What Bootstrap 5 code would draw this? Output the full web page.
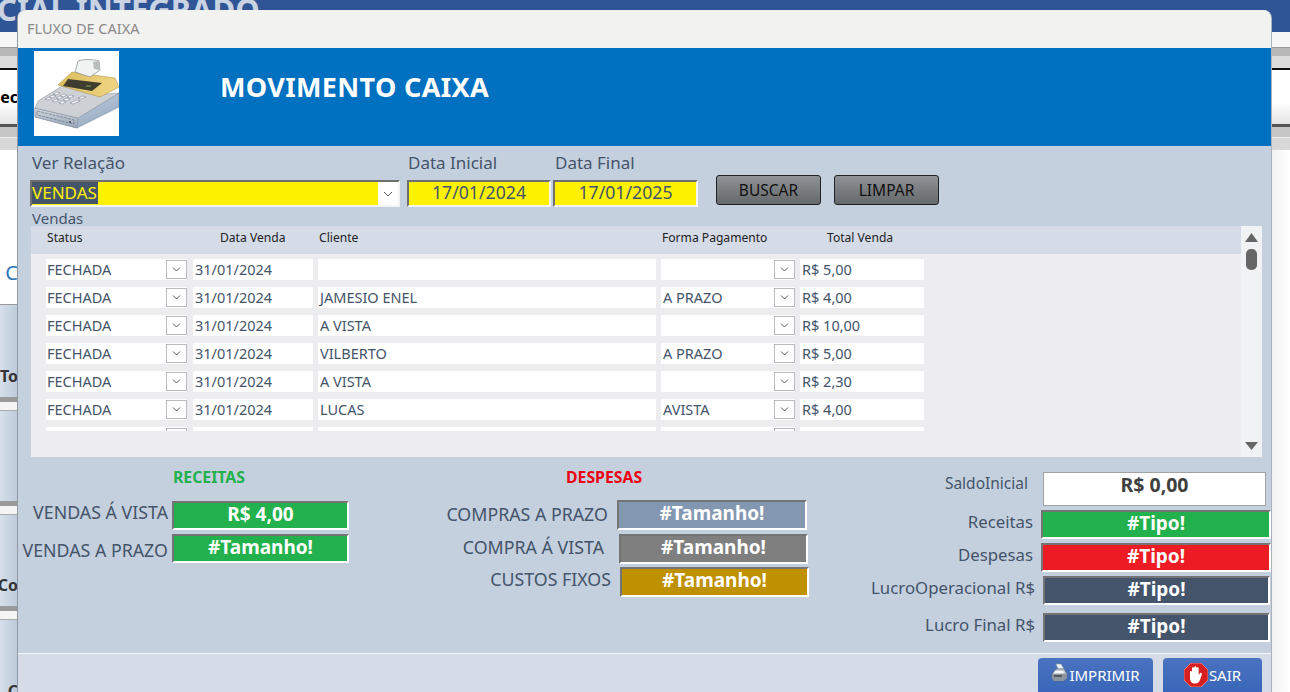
<!DOCTYPE html>
<html lang="pt-BR">
  <head>
    <meta charset="UTF-8" />
    <meta name="viewport" content="width=device-width, initial-scale=1" />
    <title>Fluxo de Caixa</title>
    <link
      href="https://cdn.jsdelivr.net/npm/bootstrap@5.3.0/dist/css/bootstrap.min.css"
      rel="stylesheet"
    />
    <style>
      html, body { height: 692px; overflow: hidden; }
      body { font-family: "Noto Sans", "Open Sans", sans-serif; color: #44546a; position: relative; background: #fff; }

      /* pagina por tras do formulario */
      .bk-top { height: 32px; background: #2f5597; overflow: hidden; }
      .bk-title { font: bold 31px/20px "Noto Sans", sans-serif; color: #c9d3e2; margin: -1px 0 0 -3px; white-space: nowrap; }
      .bk-a { height: 15px; background: #f6f6f6; }
      .bk-b { height: 9px; background: #b8b8b8; border-top: 1px solid #999; }
      .bk-c { height: 12px; background: #dcdcdc; }
      .bk-line { height: 2px; background: #111; }
      .bk-d { height: 54px; background: linear-gradient(#fff 60%, #e4e4e4); padding-top: 15px; }
      .bk-e { height: 3px; background: #555; }
      .bk-f { height: 10px; background: #c6c6c6; }
      .bk-g { height: 13px; background: #d8d8d8; border-top: 1px solid #eee; }
      .bk-side { width: 18px; overflow: hidden; }
      .bk-txt { display: flex; justify-content: flex-end; white-space: nowrap; }
      .bk-h { height: 155px; background: #fff; padding-top: 108px; border-bottom: 1px solid #999; color: #2e75b6; font-size: 20px; line-height: 30px; }
      .bk-blue { height: 92px; background: linear-gradient(90deg, #d6dfea, #bccada); color: #333; font-weight: 700; font-size: 16px; padding-top: 60px; line-height: 22px; }
      .bk-blue.plain { height: 90px; padding-top: 0; }
      .bk-blue.co { height: 91px; padding-top: 59px; }
      .bk-blue.last { height: 73px; padding-top: 60px; }
      .bk-bar { height: 5px; background: #999; }
      .bk-wh { height: 9px; background: #f5f5f5; border-bottom: 1px solid #aaa; }
      .bk-right { flex: 1; background: linear-gradient(90deg, #f1f1f1 98.4%, #fff); }

      /* janela */
      .win { position: absolute; left: 18px; top: 10px; width: 1253px; height: 682px; border-radius: 8px 8px 0 0; overflow: hidden; background: #c5d0de; box-shadow: -1px 0 0 #8f98a3, 1px 0 0 #a9b2bd; }
      .win-bar { height: 38px; background: #f2f2f0; color: #8a8a8a; font-size: 14.5px; line-height: 36px; padding-left: 9px; }
      .win-head { height: 98px; background: #0070c0; }
      .cash-ico { width: 85px; height: 85px; margin: 3px 0 0 16px; background: #fff; display: block; flex: none; }
      .win-title { font-size: 27px; font-weight: 700; color: #fff; margin: 21px 0 0 101px; line-height: 36px; letter-spacing: .35px; }

      /* filtro */
      .flt { padding-top: 6px; height: 65px; }
      .flt-lab { font-size: 17px; line-height: 22px; height: 28px; padding-left: 1px; }
      .flt-combo .flt-lab { padding-left: 2px; }
      .flt-d2 .flt-lab { padding-left: 2px; }
      .flt-combo { width: 370px; margin-left: 12px; }
      .flt-d1 { width: 144px; margin-left: 7px; }
      .flt-d2 { width: 145px; margin-left: 2px; }
      .combo-box { height: 27px; background: #fff200; display: flex; align-items: stretch; border: 2px solid; border-color: #6f6f6f #f4f4f4 #f4f4f4 #6f6f6f; font-size: 17px; }
      .combo-sel { background: #44546a; color: #fff200; height: 22px; line-height: 21px; padding: 0 1px 0 0; }
      .combo-btn { width: 20px; margin-left: auto; background: #fff; display: flex; align-items: center; justify-content: center; }
      .date-box { height: 27px; background: #fff200; border: 2px solid; border-color: #6f6f6f #f4f4f4 #f4f4f4 #6f6f6f; font-size: 17.700px; line-height: 21px; text-align: center; }
      .flt-btn { width: 105px; height: 30px; margin-top: 23px; padding: 0; border: 1px solid #222; border-radius: 3px; background: linear-gradient(#8f9296, #66696b); color: #111; font-size: 15.500px; line-height: 26px; }
      .flt-b1 { margin-left: 18px; }
      .flt-b2 { margin-left: 13px; }

      /* subformulario */
      .sub-lab { font-size: 15px; line-height: 15px; margin-left: 14px; }
      .sub { width: 1231px; height: 231px; margin-left: 13px; background: #ededef; }
      .sub-main { width: 1210px; }
      .sub-head { height: 28px; background: #d5dce8; color: #222; font-size: 12.100px; line-height: 23px; }
      .sub-det { height: 177px; overflow: hidden; padding-top: 5px; }
      .gr { display: grid; grid-template-columns: 142px 120px 338px 134px 124px; column-gap: 5px; margin-left: 15px; }
      .gr + .gr { margin-top: 7px; }
      .cel { background: #fff; height: 21px; font-size: 14.500px; line-height: 21px; padding-left: 2px; white-space: nowrap; overflow: hidden; }
      .cel-c { display: flex; }
      .cel-c span { flex: 1; }
      .cel-st { background: linear-gradient(90deg, #fff 141px, transparent 141px); padding-left: 1px; }
      .drop { width: 21px; height: 19px; margin: 1px 1px 1px 0; background: #fff; border: 1px solid #bbb; display: flex; align-items: center; justify-content: center; }
      .cel-fp .drop { margin-right: 0; }
      .h-pad { padding-left: 27px; }
      .h-one { padding-left: 1px; }
      .sub-scroll { width: 21px; background: #f1f2f4; display: flex; flex-direction: column; align-items: center; padding-top: 7px; }
      .thumb { width: 11px; height: 21px; background: #666; border-radius: 5px; margin-top: 7px; }
      .arr-d { margin-top: auto; margin-bottom: 7px; }

      /* totais */
      .tot { height: 196px; }
      .tc-a { width: 331px; padding-top: 12px; }
      .tc-b { width: 379px; margin-left: 81px; padding-top: 12px; }
      .tc-c { width: 411px; margin-left: 51px; padding-top: 15px; }
      .tit { font-size: 15.800px; font-weight: 700; line-height: 17px; }
      .tit-r { color: #22b14c; padding-left: 155px; margin-bottom: 15px; }
      .tit-d { color: #ed0010; padding-left: 136px; margin-bottom: 14px; }
      .ln { display: flex; justify-content: flex-end; align-items: center; margin-top: 4px; }
      .tit + .ln, .ln:first-child { margin-top: 0; }
      .ln-lab { font-size: 17.800px; line-height: 20px; white-space: nowrap; }
      .tc-c .ln-lab { font-size: 16.800px; margin-bottom: 5px; }
      .tc-c .saldo-lab { font-size: 15.500px; margin-bottom: 12px; }
      .vb { height: 29px; border: 2px solid; border-color: #747474 #fff #fff #747474; color: #fff; font-size: 19px; font-weight: 700; line-height: 23px; text-align: center; }
      .vb-green { background: #22b14c; }
      .vb-steel { background: #8497b0; }
      .vb-gray { background: #7f7f7f; }
      .vb-gold { background: #bf9000; }
      .vb-red { background: #ed1c24; }
      .vb-navy { background: #44546a; }
      .w177 { width: 177px; margin-left: 4px; }
      .up2 { margin-bottom: 2px; }
      .up4 { margin-bottom: 4px; }
      .up7 { margin-bottom: 7px; }
      .up8 { margin-bottom: 8px; }
      .dn3 { margin-top: 3px; }
      .b1 { width: 190px; height: 30px; margin: 0 2px 0 9px; }
      .b2 { width: 189px; height: 30px; margin: 0 1px 0 15px; }
      .b3 { width: 189px; height: 30px; margin-left: 9px; }
      .ln-b2 { margin-top: 4px; }
      .ln-b3 { margin-top: 3px; }
      .saldo { width: 223px; height: 34px; margin: 0 5px 0 15px; background: #fff; border: 1px solid #a3a3a3; color: #404040; font-size: 19.500px; font-weight: 700; line-height: 23px; text-align: center; }
      .w230 { width: 230px; margin: 0 0 0 8px; }
      .w227 { width: 227px; margin: 0 1px 0 8px; }
      .ln-last { margin-top: 8px; }

      /* rodape */
      .foot { height: 39px; background: #d5dbe7; border-top: 1px solid #f4f6f9; padding: 4px 9px 0 0; gap: 10px; overflow: hidden; }
      .foot-btn { height: 44px; padding: 0; border: 0; border-radius: 4px 4px 0 0; background: linear-gradient(#4a73c0, #3563b8); color: #fff; font-size: 15px; display: flex; justify-content: center; gap: 1px; line-height: 34px; }
      .foot-btn:hover { color: #fff; }
      .fb-imp { width: 115px; }
      .fb-sair { width: 99px; }
      .foot-ico { margin-top: 5px; flex: none; }
    </style>
  </head>
  <body>
    <!-- pagina de fundo -->
    <div class="bk-top"><div class="bk-title">CIAL INTEGRADO</div></div>
    <div class="bk-a"></div>
    <div class="bk-b"></div>
    <div class="bk-c"></div>
    <div class="bk-line"></div>
    <div class="bk-d"><div class="bk-side bk-txt fw-bold text-black">ec</div></div>
    <div class="bk-e"></div>
    <div class="bk-f"></div>
    <div class="bk-g"></div>
    <div class="d-flex">
      <div class="bk-side">
        <div class="bk-h bk-txt">C</div>
        <div class="bk-blue bk-txt">To</div>
        <div class="bk-bar"></div>
        <div class="bk-wh"></div>
        <div class="bk-blue plain"></div>
        <div class="bk-bar"></div>
        <div class="bk-wh"></div>
        <div class="bk-blue co bk-txt">Co</div>
        <div class="bk-bar"></div>
        <div class="bk-wh"></div>
        <div class="bk-blue last bk-txt">C</div>
      </div>
      <div class="bk-right"></div>
    </div>

    <!-- janela do formulario -->
    <div class="win">
      <div class="win-bar">FLUXO DE CAIXA</div>

      <div class="win-head d-flex">
        <svg class="cash-ico" viewBox="0 0 85 85" aria-label="Caixa registradora">
          <defs>
            <linearGradient id="gBase" x1="0" y1="0" x2="1" y2="1">
              <stop offset="0" stop-color="#d3deea" />
              <stop offset="1" stop-color="#8ea3bc" />
            </linearGradient>
            <linearGradient id="gFront" x1="0" y1="0" x2="0" y2="1">
              <stop offset="0" stop-color="#d4d9e0" />
              <stop offset="1" stop-color="#97a6b8" />
            </linearGradient>
            <linearGradient id="gYel" x1="0" y1="0" x2="1" y2="0">
              <stop offset="0" stop-color="#dcbd5c" />
              <stop offset="1" stop-color="#f0d584" />
            </linearGradient>
          </defs>
          <path d="M1 57 44 67 85 42V56L43 77 1 66Z" fill="url(#gBase)" stroke="#77879a" stroke-width=".5" />
          <path d="M1 57 44 67 43 77 1 66Z" fill="url(#gFront)" stroke="#77879a" stroke-width=".5" />
          <path d="M3 60 40 69 40 73 3 64Z" fill="none" stroke="#67727f" stroke-width=".7" stroke-dasharray="3 1" />
          <circle cx="36" cy="71" r="1" fill="#445" />
          <path d="M1 57 4 50 28 35 72 43 85 42 44 67Z" fill="#cdd1d6" stroke="#858e99" stroke-width=".5" />
          <path d="M24 34 38 21 81 27 85 36 66 46Z" fill="url(#gYel)" stroke="#a68c42" stroke-width=".5" />
          <path d="M29 35 34 28 68 32 58 40Z" fill="#3f3d30" />
          <path d="M52 35h5" stroke="#7fa552" stroke-width="1.200" />
          <path d="M41 21 44 10C50 8 58 8 65 10L66 19 56 26Z" fill="#f1f2f2" stroke="#85898a" stroke-width=".7" />
          <path d="M65 10 66 19 60 18 59 11Z" fill="#b9bdbd" />
          <g fill="#fcfcfd" stroke="#6e7986" stroke-width=".5">
            <path d="M19 43l4-2 3 1-4 2zM26 45l4-2 3 1-4 2zM33 46l4-2 3 1-4 2z" />
            <path d="M15 46l4-2 3 1-4 2zM22 47l4-2 3 1-4 2zM29 49l4-2 3 1-4 2z" />
            <path d="M11 48l4-2 3 1-4 2zM18 50l4-2 3 1-4 2zM25 52l4-2 3 1-4 2z" />
            <path d="M36 52l7-3 3 1-7 3zM44 47l5-2 3 1-5 2z" />
          </g>
        </svg>
        <div class="win-title">MOVIMENTO CAIXA</div>
      </div>

      <!-- filtro -->
      <div class="flt d-flex">
        <div class="flt-combo">
          <div class="flt-lab">Ver Relação</div>
          <div class="combo-box">
            <span class="combo-sel">VENDAS</span>
            <span class="combo-btn">
              <svg width="10" height="6" viewBox="0 0 10 6"><path d="M1 1 5 5 9 1" fill="none" stroke="#555" /></svg>
            </span>
          </div>
        </div>
        <div class="flt-d1">
          <div class="flt-lab">Data Inicial</div>
          <div class="date-box">17/01/2024</div>
        </div>
        <div class="flt-d2">
          <div class="flt-lab">Data Final</div>
          <div class="date-box">17/01/2025</div>
        </div>
        <button type="button" class="btn flt-btn flt-b1">BUSCAR</button>
        <button type="button" class="btn flt-btn flt-b2">LIMPAR</button>
      </div>

      <div class="sub-lab">Vendas</div>
      <div class="sub d-flex">
        <div class="sub-main">
          <div class="sub-head">
            <div class="gr">
              <div class="h-one">Status</div>
              <div class="h-pad">Data Venda</div>
              <div class="h-one">Cliente</div>
              <div class="h-one">Forma Pagamento</div>
              <div class="h-pad">Total Venda</div>
            </div>
          </div>
          <div class="sub-det">
            <div class="gr">
              <div class="cel cel-c cel-st"><span>FECHADA</span><i class="drop"><svg width="9" height="5" viewBox="0 0 9 5"><path d="M1 .5 4.500 4 8 .5" fill="none" stroke="#555" /></svg></i></div>
              <div class="cel">31/01/2024</div>
              <div class="cel"></div>
              <div class="cel cel-c cel-fp"><span></span><i class="drop"><svg width="9" height="5" viewBox="0 0 9 5"><path d="M1 .5 4.500 4 8 .5" fill="none" stroke="#555" /></svg></i></div>
              <div class="cel">R$ 5,00</div>
            </div>
            <div class="gr">
              <div class="cel cel-c cel-st"><span>FECHADA</span><i class="drop"><svg width="9" height="5" viewBox="0 0 9 5"><path d="M1 .5 4.500 4 8 .5" fill="none" stroke="#555" /></svg></i></div>
              <div class="cel">31/01/2024</div>
              <div class="cel">JAMESIO ENEL</div>
              <div class="cel cel-c cel-fp"><span>A PRAZO</span><i class="drop"><svg width="9" height="5" viewBox="0 0 9 5"><path d="M1 .5 4.500 4 8 .5" fill="none" stroke="#555" /></svg></i></div>
              <div class="cel">R$ 4,00</div>
            </div>
            <div class="gr">
              <div class="cel cel-c cel-st"><span>FECHADA</span><i class="drop"><svg width="9" height="5" viewBox="0 0 9 5"><path d="M1 .5 4.500 4 8 .5" fill="none" stroke="#555" /></svg></i></div>
              <div class="cel">31/01/2024</div>
              <div class="cel">A VISTA</div>
              <div class="cel cel-c cel-fp"><span></span><i class="drop"><svg width="9" height="5" viewBox="0 0 9 5"><path d="M1 .5 4.500 4 8 .5" fill="none" stroke="#555" /></svg></i></div>
              <div class="cel">R$ 10,00</div>
            </div>
            <div class="gr">
              <div class="cel cel-c cel-st"><span>FECHADA</span><i class="drop"><svg width="9" height="5" viewBox="0 0 9 5"><path d="M1 .5 4.500 4 8 .5" fill="none" stroke="#555" /></svg></i></div>
              <div class="cel">31/01/2024</div>
              <div class="cel">VILBERTO</div>
              <div class="cel cel-c cel-fp"><span>A PRAZO</span><i class="drop"><svg width="9" height="5" viewBox="0 0 9 5"><path d="M1 .5 4.500 4 8 .5" fill="none" stroke="#555" /></svg></i></div>
              <div class="cel">R$ 5,00</div>
            </div>
            <div class="gr">
              <div class="cel cel-c cel-st"><span>FECHADA</span><i class="drop"><svg width="9" height="5" viewBox="0 0 9 5"><path d="M1 .5 4.500 4 8 .5" fill="none" stroke="#555" /></svg></i></div>
              <div class="cel">31/01/2024</div>
              <div class="cel">A VISTA</div>
              <div class="cel cel-c cel-fp"><span></span><i class="drop"><svg width="9" height="5" viewBox="0 0 9 5"><path d="M1 .5 4.500 4 8 .5" fill="none" stroke="#555" /></svg></i></div>
              <div class="cel">R$ 2,30</div>
            </div>
            <div class="gr">
              <div class="cel cel-c cel-st"><span>FECHADA</span><i class="drop"><svg width="9" height="5" viewBox="0 0 9 5"><path d="M1 .5 4.500 4 8 .5" fill="none" stroke="#555" /></svg></i></div>
              <div class="cel">31/01/2024</div>
              <div class="cel">LUCAS</div>
              <div class="cel cel-c cel-fp"><span>AVISTA</span><i class="drop"><svg width="9" height="5" viewBox="0 0 9 5"><path d="M1 .5 4.500 4 8 .5" fill="none" stroke="#555" /></svg></i></div>
              <div class="cel">R$ 4,00</div>
            </div>
            <!-- setima linha, cortada pela area de rolagem -->
            <div class="gr">
              <div class="cel cel-c cel-st"><span></span><i class="drop"></i></div>
              <div class="cel"></div>
              <div class="cel"></div>
              <div class="cel cel-c cel-fp"><span></span><i class="drop"></i></div>
              <div class="cel"></div>
            </div>
          </div>
        </div>
        <div class="sub-scroll">
          <svg width="13" height="9" viewBox="0 0 13 9"><path d="M6.500 0 13 9H0Z" fill="#666" /></svg>
          <div class="thumb"></div>
          <svg class="arr-d" width="13" height="8" viewBox="0 0 13 8"><path d="M0 0H13L6.500 8Z" fill="#666" /></svg>
        </div>
      </div>

      <!-- totais -->
      <div class="tot d-flex">
        <div class="tc-a">
          <div class="tit tit-r">RECEITAS</div>
          <div class="ln">
            <div class="ln-lab up8">VENDAS Á VISTA</div>
            <div class="vb vb-green w177">R$ 4,00</div>
          </div>
          <div class="ln">
            <div class="ln-lab dn3">VENDAS A PRAZO</div>
            <div class="vb vb-green w177">#Tamanho!</div>
          </div>
        </div>
        <div class="tc-b">
          <div class="tit tit-d">DESPESAS</div>
          <div class="ln">
            <div class="ln-lab up2">COMPRAS A PRAZO</div>
            <div class="vb vb-steel b1">#Tamanho!</div>
          </div>
          <div class="ln ln-b2">
            <div class="ln-lab up4">COMPRA Á VISTA</div>
            <div class="vb vb-gray b2">#Tamanho!</div>
          </div>
          <div class="ln ln-b3">
            <div class="ln-lab up7">CUSTOS FIXOS</div>
            <div class="vb vb-gold b3">#Tamanho!</div>
          </div>
        </div>
        <div class="tc-c">
          <div class="ln">
            <div class="ln-lab saldo-lab">SaldoInicial</div>
            <div class="saldo">R$ 0,00</div>
          </div>
          <div class="ln">
            <div class="ln-lab">Receitas</div>
            <div class="vb vb-green w230">#Tipo!</div>
          </div>
          <div class="ln">
            <div class="ln-lab">Despesas</div>
            <div class="vb vb-red w230">#Tipo!</div>
          </div>
          <div class="ln">
            <div class="ln-lab">LucroOperacional R$</div>
            <div class="vb vb-navy w227">#Tipo!</div>
          </div>
          <div class="ln ln-last">
            <div class="ln-lab">Lucro Final R$</div>
            <div class="vb vb-navy w227">#Tipo!</div>
          </div>
        </div>
      </div>

      <!-- rodape -->
      <div class="foot d-flex justify-content-end">
        <button type="button" class="btn foot-btn fb-imp">
          <svg class="foot-ico" width="17" height="19" viewBox="0 0 17 19" aria-hidden="true">
            <path d="M5 1h5l3 5H7Z" fill="#eef2f6" stroke="#8d98a6" stroke-width=".6" />
            <path d="M1 11 5 6h8l3 5v4l-4 3H3l-2-3Z" fill="#c4cbd3" stroke="#59616b" stroke-width=".6" />
            <path d="M1 11h11l4-1v5l-4 3H3l-2-3Z" fill="#8c949e" />
            <path d="M3 13h8" stroke="#2c3238" stroke-width="1.200" />
            <path d="M4 8h8l1 2H3Z" fill="#f4f6f8" />
          </svg>
          <span>IMPRIMIR</span>
        </button>
        <button type="button" class="btn foot-btn fb-sair">
          <svg class="foot-ico" width="24" height="24" viewBox="0 0 24 24" aria-hidden="true">
            <path d="M7 0h10l7 7v10l-7 7H7l-7-7V7Z" fill="#d5201f" stroke="#f28a80" stroke-width=".8" />
            <path d="M6 9c0-1.500 2-1.500 2 0v3V5.500c0-1.600 2.200-1.600 2.200 0V11 4.500c0-1.600 2.300-1.600 2.300 0V11 5.500c0-1.600 2.200-1.600 2.200 0V12l1-1.500c1-1.400 2.800-.4 2.100 1L16 17c-1 2.500-2.500 3.500-5 3.500-3 0-5-2-5-5Z" fill="#fff" />
          </svg>
          <span>SAIR</span>
        </button>
      </div>
    </div>

    <script src="https://cdn.jsdelivr.net/npm/bootstrap@5.3.0/dist/js/bootstrap.bundle.min.js"></script>
  </body>
</html>
